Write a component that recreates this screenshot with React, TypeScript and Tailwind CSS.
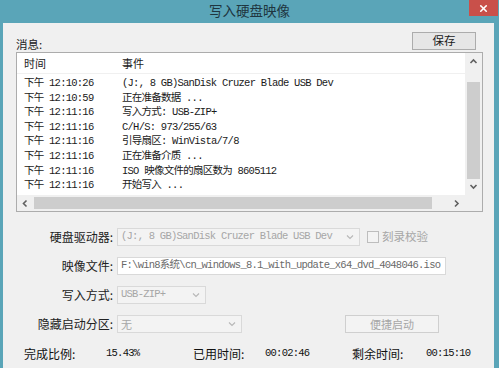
import { X } from "lucide-react";

const cjk = "font-['Noto_Sans_CJK_SC',sans-serif]";
const mono = "font-['Liberation_Mono','Noto_Sans_CJK_SC',monospace] text-[10.5px] tracking-[-0.75px]";

const rows: [string, string][] = [
  ["下午 12:10:26", "(J:, 8 GB)SanDisk Cruzer Blade USB Dev"],
  ["下午 12:10:59", "正在准备数据 ..."],
  ["下午 12:11:16", "写入方式: USB-ZIP+"],
  ["下午 12:11:16", "C/H/S: 973/255/63"],
  ["下午 12:11:16", "引导扇区: WinVista/7/8"],
  ["下午 12:11:16", "正在准备介质 ..."],
  ["下午 12:11:16", "ISO 映像文件的扇区数为 8605112"],
  ["下午 12:11:16", "开始写入 ..."],
];

function Chevron({ dir }: { dir: "up" | "down" | "left" | "right" }) {
  const d = {
    up: "M1.5 5 L4.5 2 L7.5 5",
    down: "M1.5 3 L4.5 6 L7.5 3",
    left: "M5.5 1.5 L2.5 4.5 L5.5 7.5",
    right: "M3 1.5 L6 4.5 L3 7.5",
  }[dir];
  return (
    <svg width="9" height="9" viewBox="0 0 9 9">
      <path d={d} fill="none" stroke="#606060" strokeWidth="1.6" />
    </svg>
  );
}

function Combo({ w, text, font }: { w: string; text: string; font: string }) {
  return (
    <div className={`${w} h-[18px] border border-[#d9d9d9] bg-[#f3f3f3] flex items-center justify-between pl-[3px] pr-[5px]`}>
      <span className={`${font} text-[#a6a6a6] whitespace-nowrap`}>{text}</span>
      <svg width="8" height="6" viewBox="0 0 8 6">
        <path d="M1 1.5 L4 4.5 L7 1.5" fill="none" stroke="#b8b8b8" strokeWidth="1.2" />
      </svg>
    </div>
  );
}

export default function App() {
  return (
    <div className="w-[499px] h-[368px] bg-[#5aa5b8] flex flex-col overflow-hidden">
      {/* Title bar */}
      <div className="relative h-[23px] flex items-center justify-center">
        <span className={`${cjk} text-[13.5px] text-[#1f3640] -mt-[3px]`}>写入硬盘映像</span>
        <div className="absolute right-[1px] top-0 w-[29px] h-[16px] bg-[#c9504a] flex items-center justify-center">
          <X size={11} color="#ffffff" strokeWidth={3.5} />
        </div>
      </div>

      {/* Client area */}
      <div className="flex-1 ml-[3px] mr-[5px] bg-[#f0f0f0] flex flex-col pl-[13px] pr-[11px]">
        <div className="flex items-end justify-between pt-[9px]">
          <span className={`${cjk} text-[11.5px] text-[#222] leading-[14px] -mb-[1px]`}>消息:</span>
          <div className={`${cjk} w-[64px] h-[18px] border border-[#acacac] bg-[#e6e6e6] flex items-center justify-center text-[11.5px] text-[#1a1a1a] mr-[7px]`}>
            保存
          </div>
        </div>

        {/* Message list */}
        <div className="mt-[2px] h-[160px] border border-[#acacac] bg-white flex flex-col">
          <div className="flex flex-1 min-h-0">
            <div className="flex-1 flex flex-col">
              <div className={`${cjk} h-[21px] pt-[1px] flex items-center text-[11px] text-[#222] border-b border-[#f0f0f0]`}>
                <span className="w-[98px] pl-[7px]">时间</span>
                <span className="pl-[7px]">事件</span>
              </div>
              <div className="pt-[2px]">
                {rows.map(([t, e], i) => (
                  <div key={i} className={`${mono} h-[14.6px] leading-[14.6px] flex text-[#1a1a1a] whitespace-nowrap`}>
                    <span className="w-[98px] pl-[7px]">{t}</span>
                    <span className="pl-[7px]">{e}</span>
                  </div>
                ))}
              </div>
            </div>
            {/* vertical scrollbar */}
            <div className="w-[17px] bg-[#f0f0f0] flex flex-col items-center">
              <div className="h-[17px] flex items-center justify-center mt-[1px]">
                <Chevron dir="up" />
              </div>
              <div className="flex-1 w-full flex flex-col px-[2px]">
                <div className="h-[11px]" />
                <div className="h-[97px] bg-[#cdcdcd]" />
              </div>
              <div className="h-[17px] flex items-center justify-center">
                <Chevron dir="down" />
              </div>
            </div>
          </div>
          {/* horizontal scrollbar */}
          <div className="h-[16px] flex bg-[#f0f0f0]">
            <div className="w-[17px] flex items-center justify-center">
              <Chevron dir="left" />
            </div>
            <div className="flex-1 flex items-center py-[2px] pr-[16px]">
              <div className="h-full w-full bg-[#cdcdcd]" />
            </div>
            <div className="w-[17px] flex items-center justify-center">
              <Chevron dir="right" />
            </div>
            <div className="w-[17px]" />
          </div>
        </div>

        {/* Form */}
        <div className={`${cjk} mt-[16px] grid grid-cols-[97px_1fr] gap-x-[4px] gap-y-[11px] items-center text-[12px] text-[#222]`}>
          <span className="text-right">硬盘驱动器:</span>
          <div className="flex items-center">
            <Combo w="w-[243px]" text="(J:, 8 GB)SanDisk Cruzer Blade USB Dev" font={mono} />
            <div className="ml-[7px] w-[12px] h-[12px] border border-[#bdbdbd] bg-[#f3f3f3]" />
            <span className="ml-[3px] text-[#a6a6a6] text-[11.5px]">刻录校验</span>
          </div>

          <span className="text-right">映像文件:</span>
          <div className="w-[329px] h-[18px] border border-[#d9d9d9] bg-white flex items-center pl-[3px]">
            <span className={`${mono} text-[#6a6a6a] whitespace-nowrap`}>F:\win8系统\cn_windows_8.1_with_update_x64_dvd_4048046.iso</span>
          </div>

          <span className="text-right">写入方式:</span>
          <Combo w="w-[89px]" text="USB-ZIP+" font={mono} />

          <span className="text-right">隐藏启动分区:</span>
          <div className="flex items-center">
            <Combo w="w-[125px]" text="无" font={`${cjk} text-[11px]`} />
            <div className="ml-[103px] w-[94px] h-[18px] border border-[#cfcfcf] bg-[#f3f3f3] flex items-center justify-center text-[#a6a6a6] text-[11px]">
              便捷启动
            </div>
          </div>
        </div>

        {/* Progress */}
        <div className="mt-[12px] flex items-center text-[#111] -ml-[13px] pl-[21px]">
          <span className={`${cjk} w-[82px] text-[12px]`}>完成比例:</span>
          <span className={`${mono} w-[87px]`}>15.43%</span>
          <span className={`${cjk} w-[72px] text-[12px]`}>已用时间:</span>
          <span className={`${mono} w-[87px]`}>00:02:46</span>
          <span className={`${cjk} w-[74px] text-[12px]`}>剩余时间:</span>
          <span className={`${mono}`}>00:15:10</span>
        </div>
      </div>
    </div>
  );
}
